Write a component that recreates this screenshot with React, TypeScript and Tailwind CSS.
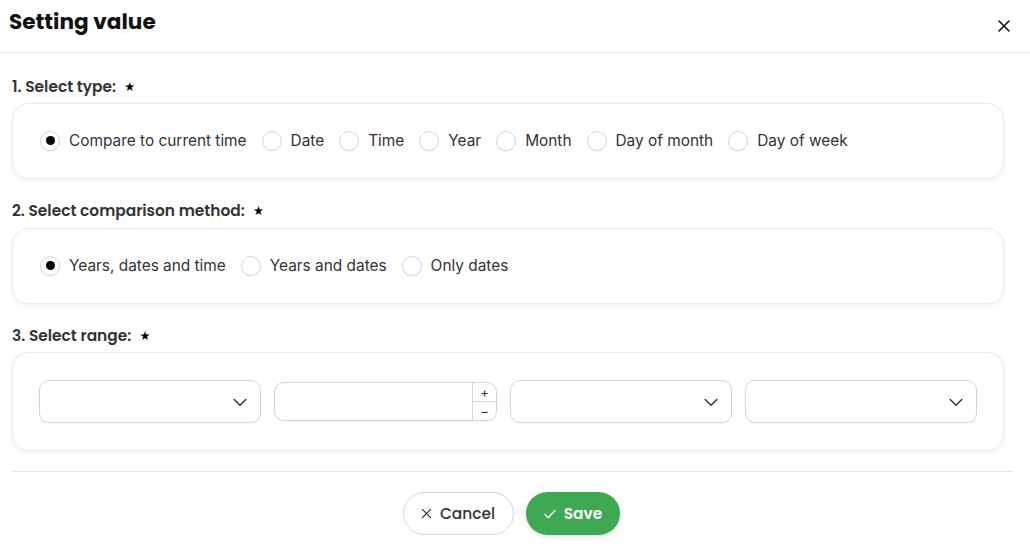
import { useState } from "react";

const head = { fontFamily: "Poppins, Inter, 'Noto Sans', sans-serif" };
const body = { fontFamily: "Inter, 'Noto Sans', sans-serif" };

function Radio({ label, checked, onClick }: { label: string; checked: boolean; onClick: () => void }) {
  return (
    <button onClick={onClick} className="flex items-center gap-[9px]">
      <span className="w-5 h-5 rounded-full border border-[#d4d6dd] bg-white flex items-center justify-center shadow-[0_1px_1px_rgba(0,0,0,0.06)]">
        {checked && <span className="w-[9px] h-[9px] rounded-full bg-black" />}
      </span>
      <span className="text-[15.4px] text-[#333]">{label}</span>
    </button>
  );
}

function Section({ title }: { title: string }) {
  return (
    <div className="flex items-center h-[18px] text-[15.4px] font-semibold text-[#333]" style={head}>
      {title}
      <span className="ml-[8px] text-[11px] text-black">★</span>
    </div>
  );
}

function Chevron() {
  return (
    <svg width="20" height="20" viewBox="0 0 24 24" fill="none" stroke="#333" strokeWidth="1.7" strokeLinecap="round" strokeLinejoin="round">
      <path d="M5 9l7 7 7-7" />
    </svg>
  );
}

function SelectBox({ w = "w-[222px]" }: { w?: string }) {
  return (
    <div className={`${w} h-[43px] rounded-[10px] border border-[#d4d6dd] bg-white flex items-center justify-end pr-[10px] shadow-[0_1px_2px_rgba(0,0,0,0.05)]`}>
      <Chevron />
    </div>
  );
}

export default function App() {
  const [type, setType] = useState(0);
  const [method, setMethod] = useState(0);
  const types = ["Compare to current time", "Date", "Time", "Year", "Month", "Day of month", "Day of week"];
  const methods = ["Years, dates and time", "Years and dates", "Only dates"];

  return (
    <div className="w-[1030px] h-[560px] bg-white" style={body}>
      <div className="h-[53px] border-b border-[#e8e8e8] flex items-center justify-between pl-[9px] pr-[19px]">
        <h1 className="text-[21.6px] font-bold text-[#111] -mt-[8px]" style={head}>Setting value</h1>
        <svg width="14" height="14" viewBox="0 0 14 14" stroke="#111" strokeWidth="1.6" strokeLinecap="round">
          <path d="M2 2l10 10M12 2L2 12" />
        </svg>
      </div>

      <div className="pl-3 pr-[17px]">
        <div className="pt-[25px]">
          <Section title="1. Select type:" />
        </div>
        <div className="mt-[7px] w-[992px] h-[76px] rounded-2xl border border-[#ebebef] shadow-[0_2px_4px_rgba(0,0,0,0.05)] flex items-center gap-[15px] pl-[27px]">
          {types.map((t, i) => (
            <Radio key={t} label={t} checked={type === i} onClick={() => setType(i)} />
          ))}
        </div>

        <div className="mt-[23px]">
          <Section title="2. Select comparison method:" />
        </div>
        <div className="mt-[8px] w-[992px] h-[76px] rounded-2xl border border-[#ebebef] shadow-[0_2px_4px_rgba(0,0,0,0.05)] flex items-center gap-[15px] pl-[27px]">
          {methods.map((t, i) => (
            <Radio key={t} label={t} checked={method === i} onClick={() => setMethod(i)} />
          ))}
        </div>

        <div className="mt-[23px]">
          <Section title="3. Select range:" />
        </div>
        <div className="mt-[7px] w-[992px] h-[99px] rounded-2xl border border-[#ebebef] shadow-[0_2px_4px_rgba(0,0,0,0.05)] flex items-center gap-[13px] pl-[26px]">
          <SelectBox />
          <div className="w-[223px] h-[39px] rounded-[10px] border border-[#d4d6dd] bg-white flex overflow-hidden shadow-[0_1px_2px_rgba(0,0,0,0.05)]">
            <div className="flex-1" />
            <div className="w-6 border-l border-[#d4d6dd] flex flex-col text-[13px] text-[#333] leading-none">
              <span className="flex-1 flex items-center justify-center border-b border-[#d4d6dd]">+</span>
              <span className="flex-1 flex items-center justify-center">−</span>
            </div>
          </div>
          <SelectBox />
          <SelectBox w="w-[232px]" />
        </div>

        <div className="mt-[20px] border-t border-[#e6e6e6]" />

        <div className="mt-5 flex justify-center gap-3 pr-[3px]" style={head}>
          <button className="w-[111px] h-[43px] rounded-full border border-[#d4d6dd] bg-white flex items-center justify-center gap-2 text-[15.4px] font-medium text-[#333]">
            <svg width="11" height="11" viewBox="0 0 12 12" stroke="#333" strokeWidth="1.4" strokeLinecap="round">
              <path d="M1.5 1.5l9 9M10.5 1.5l-9 9" />
            </svg>
            Cancel
          </button>
          <button className="w-[94px] h-[43px] rounded-full bg-[#3ea852] flex items-center justify-center gap-[7px] text-[15.4px] font-semibold text-white shadow-[0_2px_4px_rgba(0,0,0,0.12)]">
            <svg width="14" height="14" viewBox="0 0 14 14" fill="none" stroke="white" strokeWidth="1.5" strokeLinecap="round" strokeLinejoin="round">
              <path d="M2 7.5l3.2 3.2L12 3.5" />
            </svg>
            Save
          </button>
        </div>
      </div>
    </div>
  );
}
